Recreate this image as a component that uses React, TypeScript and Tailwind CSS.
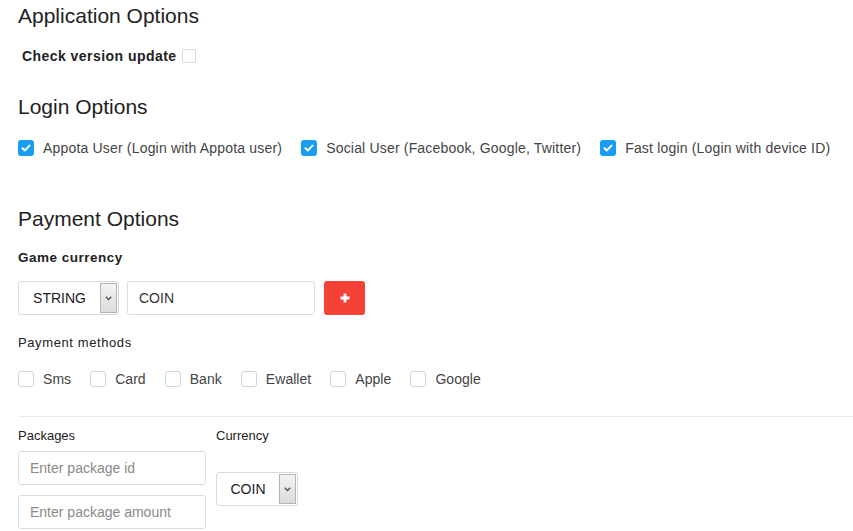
import React from 'react';

const font = { fontFamily: '"Liberation Sans", Arial, sans-serif' };

const Check: React.FC<{ checked?: boolean }> = ({ checked }) =>
  checked ? (
    <span className="w-4 h-4 rounded-[3px] bg-[#1a9cf0] flex items-center justify-center shrink-0">
      <svg width="10" height="8" viewBox="0 0 10 8">
        <path d="M1.5 4.2 L3.9 6.4 L8.5 1.6" stroke="#fff" strokeWidth="2" fill="none" strokeLinecap="round" strokeLinejoin="round" />
      </svg>
    </span>
  ) : (
    <span className="w-4 h-4 rounded-[3px] border border-[#d5d5d5] bg-white shrink-0" />
  );

const FakeSelect: React.FC<{ value: string; width: string }> = ({ value, width }) => (
  <div className={`${width} h-[34px] border border-[#d9d9d9] rounded-[3px] bg-white flex items-stretch`}>
    <div className="flex-1 flex items-center justify-center text-[14px] text-[#222]">{value}</div>
    <div className="w-[17px] my-[1px] mr-[1px] border border-[#b5b5b5] bg-gradient-to-b from-[#f2f2f2] to-[#dcdcdc] flex items-center justify-center">
      <svg width="7" height="5" viewBox="0 0 7 5">
        <path d="M0.8 0.8 L3.5 3.6 L6.2 0.8" stroke="#555" strokeWidth="1.4" fill="none" />
      </svg>
    </div>
  </div>
);

const Input: React.FC<{ placeholder?: string; value?: string; width: string }> = ({ placeholder, value, width }) => (
  <div className={`${width} h-[34px] border border-[#dcdcdc] rounded-[3px] bg-white flex items-center px-[11px] text-[14px]`}>
    {value ? <span className="text-[#333]">{value}</span> : <span className="text-[#8a8a8a]">{placeholder}</span>}
  </div>
);

export default function App() {
  const login = [
    'Appota User (Login with Appota user)',
    'Social User (Facebook, Google, Twitter)',
    'Fast login (Login with device ID)',
  ];
  const methods = ['Sms', 'Card', 'Bank', 'Ewallet', 'Apple', 'Google'];

  return (
    <div style={font} className="w-[853px] h-[531px] overflow-hidden bg-white text-[#333] pl-[18px]">
      <h3 className="mt-[5px] text-[21px] leading-[22px] text-[#222]">Application Options</h3>
      <div className="mt-[19px] ml-[4px] flex items-center gap-[5px] h-[20px]">
        <span className="text-[14px] font-bold text-[#222] tracking-[0.45px]">Check version update</span>
        <span className="w-[14px] h-[14px] rounded-[2px] border border-[#dadada] bg-white" />
      </div>

      <h3 className="mt-[30px] text-[21px] leading-[22px] text-[#222]">Login Options</h3>
      <div className="mt-[20px] flex items-center gap-[19px] h-[20px] whitespace-nowrap">
        {login.map((l) => (
          <label key={l} className="flex items-center gap-[9px] shrink-0 text-[14px] text-[#444] tracking-[0.18px]">
            <Check checked />
            <span>{l}</span>
          </label>
        ))}
      </div>

      <h3 className="mt-[50px] text-[21px] leading-[22px] text-[#222]">Payment Options</h3>
      <div className="mt-[19px] text-[13.5px] leading-[18px] font-bold text-[#222] tracking-[0.5px]">Game currency</div>
      <div className="mt-[14px] flex items-center gap-[8px]">
        <FakeSelect value="STRING" width="w-[101px]" />
        <Input value="COIN" width="w-[188px]" />
        <button className="w-[41px] h-[34px] rounded-[3px] bg-[#f44336] flex items-center justify-center ml-[1px]">
          <svg width="10" height="10" viewBox="0 0 10 10">
            <path d="M5 0.5 V9.5 M0.5 5 H9.5" stroke="#fff" strokeWidth="2.8" />
          </svg>
        </button>
      </div>

      <div className="mt-[19px] text-[13px] leading-[18px] text-[#222] tracking-[0.6px]">Payment methods</div>
      <div className="mt-[17px] flex items-center gap-[19px] h-[20px] whitespace-nowrap">
        {methods.map((m) => (
          <label key={m} className="flex items-center gap-[9px] shrink-0 text-[14px] text-[#444] tracking-[0.05px]">
            <Check />
            <span>{m}</span>
          </label>
        ))}
      </div>

      <div className="mt-[27px] border-t border-[#eaeaea]" />

      <div className="mt-[10px] flex gap-[10px]">
        <div className="w-[188px]">
          <div className="text-[13px] leading-[18px] text-[#222]">Packages</div>
          <div className="mt-[6px] flex flex-col gap-[10px]">
            <Input placeholder="Enter package id" width="w-[188px]" />
            <Input placeholder="Enter package amount" width="w-[188px]" />
          </div>
        </div>
        <div>
          <div className="text-[13px] leading-[18px] text-[#222]">Currency</div>
          <div className="mt-[27px]">
            <FakeSelect value="COIN" width="w-[82px]" />
          </div>
        </div>
      </div>
    </div>
  );
}
